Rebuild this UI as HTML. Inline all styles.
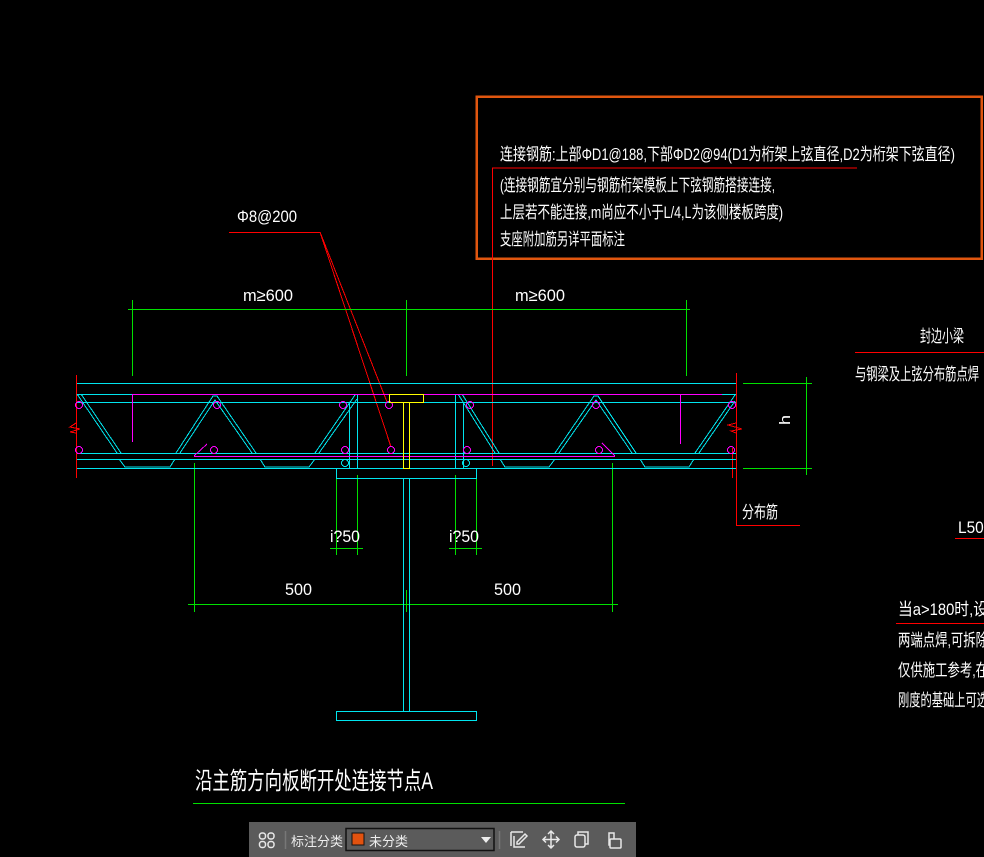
<!DOCTYPE html>
<html><head><meta charset="utf-8"><style>
html,body{margin:0;padding:0;background:#000;width:984px;height:857px;overflow:hidden}
svg{display:block}
text{font-family:"Liberation Sans","Noto Sans CJK SC",sans-serif;fill:#fff}
.tb{position:absolute;left:249px;top:822px;width:387px;height:35px;background:#5b5b5b;font-family:"Liberation Sans","Noto Sans CJK SC",sans-serif;color:#eee;font-size:13px}
</style></head><body>
<svg width="984" height="857" viewBox="0 0 984 857" xmlns="http://www.w3.org/2000/svg">
<g fill="none" stroke-width="1" shape-rendering="crispEdges">
<rect x="476.5" y="96.5" width="505" height="162" stroke="#e0560f" stroke-width="2.5"/>
<g stroke="#ff0000">
<line x1="492" y1="168" x2="857" y2="168"/>
<line x1="492.5" y1="168" x2="492.5" y2="466"/>
<line x1="229" y1="232.5" x2="320" y2="232.5"/>
<line x1="320" y1="232" x2="391" y2="447"/>
<line x1="320" y1="232" x2="387" y2="402"/>
<line x1="76.5" y1="375" x2="76.5" y2="478"/>
<polyline points="76,423 70,427 80,429 70,432 76,433"/>
<line x1="736.5" y1="373" x2="736.5" y2="525"/>
<polyline points="736,423 728,425 742,429 731,431 736,433"/>
<line x1="736" y1="525.5" x2="800" y2="525.5"/>
<line x1="855" y1="352.5" x2="984" y2="352.5"/>
<line x1="955" y1="538.5" x2="984" y2="538.5"/>
<line x1="896" y1="623.5" x2="984" y2="623.5"/>
<line x1="732.5" y1="448" x2="732.5" y2="478"/>
</g>
<g stroke="#00e000">
<line x1="128" y1="309.5" x2="690" y2="309.5"/>
<line x1="132.5" y1="300" x2="132.5" y2="376"/>
<line x1="406.5" y1="300" x2="406.5" y2="376"/>
<line x1="686.5" y1="300" x2="686.5" y2="376"/>
<line x1="743" y1="383.5" x2="812" y2="383.5"/>
<line x1="743" y1="468.5" x2="812" y2="468.5"/>
<line x1="806.5" y1="377" x2="806.5" y2="475"/>
<line x1="188" y1="604.5" x2="618" y2="604.5"/>
<line x1="194.5" y1="463" x2="194.5" y2="612"/>
<line x1="406.5" y1="590" x2="406.5" y2="612"/>
<line x1="612.5" y1="463" x2="612.5" y2="612"/>
<line x1="336.5" y1="475" x2="336.5" y2="555"/>
<line x1="357.5" y1="475" x2="357.5" y2="555"/>
<line x1="455.5" y1="475" x2="455.5" y2="555"/>
<line x1="476.5" y1="475" x2="476.5" y2="555"/>
<line x1="330" y1="548.5" x2="363" y2="548.5"/>
<line x1="449" y1="548.5" x2="482" y2="548.5"/>
<line x1="193" y1="803.5" x2="625" y2="803.5"/>
</g>
<g stroke="#00e5ee">
<line x1="77" y1="383.5" x2="736" y2="383.5"/>
<line x1="77" y1="394.5" x2="736" y2="394.5"/>
<line x1="77" y1="402.5" x2="736" y2="402.5"/>
<line x1="77" y1="453.5" x2="736" y2="453.5"/>
<line x1="77" y1="459.5" x2="736" y2="459.5"/>
<line x1="77" y1="468.5" x2="736" y2="468.5"/>
<line x1="349.5" y1="402" x2="349.5" y2="468"/>
<line x1="357.5" y1="394" x2="357.5" y2="468"/>
<line x1="455.5" y1="394" x2="455.5" y2="468"/>
<line x1="463.5" y1="402" x2="463.5" y2="468"/>
<polyline points="77,394 117,453"/><polyline points="81,394 121,453"/>
<polyline points="176,453 213,396 217,396 256,453"/><polyline points="180,453 215,400 252,453"/>
<polyline points="315,453 355,395"/><polyline points="319,453 357,399"/>
<polyline points="458,394 495,453"/><polyline points="462,394 499,453"/>
<polyline points="555,453 594,396 598,396 636,453"/><polyline points="559,453 596,400 632,453"/>
<polyline points="695,453 735,395"/><polyline points="699,453 735,401"/>
<polyline points="119,459 125,467 170,467 175,459"/>
<polyline points="260,459 265,467 309,467 315,459"/>
<polyline points="500,459 505,467 549,467 555,459"/>
<polyline points="640,459 645,467 689,467 694,459"/>
<rect x="336.5" y="468.5" width="140" height="10"/>
<line x1="403.5" y1="478" x2="403.5" y2="711"/>
<line x1="409.5" y1="478" x2="409.5" y2="711"/>
<rect x="336.5" y="711.5" width="140" height="9"/>
<circle cx="345" cy="463" r="3.5"/><circle cx="466" cy="463" r="3.5"/>
</g>
<g stroke="#ff00ff">
<line x1="132" y1="394.5" x2="722" y2="394.5"/>
<line x1="132.5" y1="394" x2="132.5" y2="442"/>
<line x1="680.5" y1="394" x2="680.5" y2="444"/>
<line x1="194" y1="456.5" x2="615" y2="456.5"/>
<line x1="194" y1="456" x2="207" y2="444"/>
<line x1="602" y1="443" x2="615" y2="456"/>
<circle cx="79" cy="405" r="3.5"/><circle cx="79" cy="450" r="3.5"/>
<circle cx="217" cy="405" r="3.5"/><circle cx="214" cy="450" r="3.5"/>
<circle cx="343" cy="405" r="3.5"/><circle cx="345" cy="450" r="3.5"/>
<circle cx="389" cy="405" r="3.5"/><circle cx="391" cy="450" r="3.5"/>
<circle cx="470" cy="405" r="3.5"/><circle cx="467" cy="450" r="3.5"/>
<circle cx="596" cy="405" r="3.5"/><circle cx="599" cy="450" r="3.5"/>
<circle cx="732" cy="405" r="3.5"/><circle cx="731" cy="450" r="3.5"/>
</g>
<g stroke="#ffff00">
<rect x="389.5" y="394.5" width="34" height="8"/>
<rect x="403.5" y="402.5" width="6" height="66"/>
</g>
</g>
<g font-size="17">
<text x="500" y="160" textLength="455" lengthAdjust="spacingAndGlyphs">连接钢筋:上部ΦD1@188,下部ΦD2@94(D1为桁架上弦直径,D2为桁架下弦直径)</text>
<text x="500" y="191" textLength="275" lengthAdjust="spacingAndGlyphs">(连接钢筋宜分别与钢筋桁架模板上下弦钢筋搭接连接,</text>
<text x="500" y="218" textLength="283" lengthAdjust="spacingAndGlyphs">上层若不能连接,m尚应不小于L/4,L为该侧楼板跨度)</text>
<text x="500" y="245" textLength="125" lengthAdjust="spacingAndGlyphs">支座附加筋另详平面标注</text>
<text x="237" y="222" textLength="60" lengthAdjust="spacingAndGlyphs">Φ8@200</text>
<text x="243" y="301" textLength="50" lengthAdjust="spacingAndGlyphs">m≥600</text>
<text x="515" y="301" textLength="50" lengthAdjust="spacingAndGlyphs">m≥600</text>
<text x="742" y="518" textLength="36" lengthAdjust="spacingAndGlyphs">分布筋</text>
<text x="920" y="342" textLength="44" lengthAdjust="spacingAndGlyphs">封边小梁</text>
<text x="855" y="380" textLength="124" lengthAdjust="spacingAndGlyphs">与钢梁及上弦分布筋点焊</text>
<text x="958" y="533" textLength="30" lengthAdjust="spacingAndGlyphs">L50:</text>
<text x="898" y="615" textLength="90" lengthAdjust="spacingAndGlyphs">当a&gt;180时,设</text>
<text x="898" y="646" textLength="90" lengthAdjust="spacingAndGlyphs">两端点焊,可拆除</text>
<text x="898" y="676" textLength="90" lengthAdjust="spacingAndGlyphs">仅供施工参考,在</text>
<text x="898" y="706" textLength="90" lengthAdjust="spacingAndGlyphs">刚度的基础上可选</text>
<text x="330" y="542" textLength="30" lengthAdjust="spacingAndGlyphs">i?50</text>
<text x="449" y="542" textLength="30" lengthAdjust="spacingAndGlyphs">i?50</text>
<text x="285" y="595" textLength="27" lengthAdjust="spacingAndGlyphs">500</text>
<text x="494" y="595" textLength="27" lengthAdjust="spacingAndGlyphs">500</text>
<text x="790" y="425" transform="rotate(-90 790 425)" font-size="15" textLength="10" lengthAdjust="spacingAndGlyphs">h</text>
</g>
<text x="195" y="789" font-size="24" textLength="238" lengthAdjust="spacingAndGlyphs">沿主筋方向板断开处连接节点A</text>
</svg>
<div class="tb">
<svg width="387" height="35" style="position:absolute;left:0;top:0" fill="none" stroke="#e8e8e8" stroke-width="1.5">
<rect x="10.5" y="11" width="6" height="6" rx="2.5"/><rect x="19" y="11" width="6" height="6" rx="2.5"/><rect x="10.5" y="19.5" width="6" height="6" rx="2.5"/><rect x="19" y="19.5" width="6" height="6" rx="2.5"/>
<line x1="36.5" y1="9" x2="36.5" y2="27" stroke="#777"/>
<rect x="97" y="6.5" width="148" height="22" stroke="#111"/>
<rect x="103" y="11" width="12" height="12" fill="#e2520f" stroke="#111" stroke-width="1"/>
<polygon points="232,15 242,15 237,21" fill="#eee" stroke="none"/>
<line x1="250.5" y1="9" x2="250.5" y2="27" stroke="#777"/>
<path d="M265 14v11h11M262 10h12M262 10v14M268 20l8-8 2 2-8 8h-2z"/>
<path d="M302 9v17M293.5 17.5h17M299 12l3-3 3 3M299 23l3 3 3-3M297 14.5l-3 3 3 3M307 14.5l3 3-3 3"/>
<rect x="326" y="13" width="10" height="12" rx="2"/><path d="M329 13v-3h10v12h-3"/>
<rect x="361" y="17" width="11" height="9" rx="1"/><path d="M365 17v-6h-5v12h1M362 11h3"/>
</svg>
<span style="position:absolute;left:42px;top:9px">标注分类</span>
<span style="position:absolute;left:120px;top:9px">未分类</span>
</div>
</body></html>
